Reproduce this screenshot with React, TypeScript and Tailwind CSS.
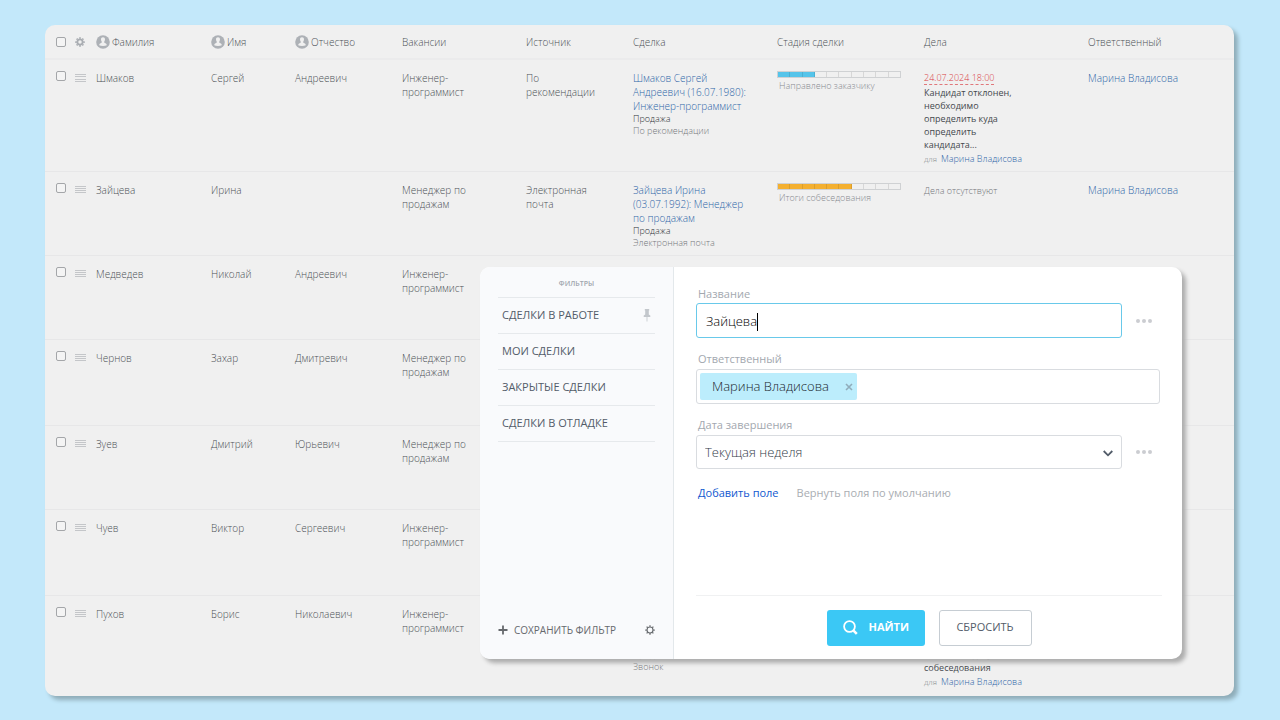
import type { ReactNode } from 'react';
import clsx from 'clsx';

type Activity = {
  date: string;
  text: string;
};

type Row = {
  surname: string;
  name: string;
  patronymic?: string;
  vacancy: string;
  height: string;
  source?: string;
  deal?: string;
  dealSource?: string;
  stage?: { label: string; done: number; color: string };
  activity?: Activity;
};

const engineer = 'Инженер-программист';
const manager = 'Менеджер по продажам';

const rows: Row[] = [
  {
    surname: 'Шмаков',
    name: 'Сергей',
    patronymic: 'Андреевич',
    vacancy: engineer,
    height: 'h-[112px]',
    source: 'По рекомендации',
    deal: 'Шмаков Сергей Андреевич (16.07.1980): Инженер-программист',
    dealSource: 'По рекомендации',
    stage: { label: 'Направлено заказчику', done: 3, color: 'bg-[#55c4ea]' },
    activity: {
      date: '24.07.2024 18:00',
      text: 'Кандидат отклонен, необходимо определить куда определить кандидата...',
    },
  },
  {
    surname: 'Зайцева',
    name: 'Ирина',
    vacancy: manager,
    height: 'h-[84px]',
    source: 'Электронная почта',
    deal: 'Зайцева Ирина (03.07.1992): Менеджер по продажам',
    dealSource: 'Электронная почта',
    stage: { label: 'Итоги собеседования', done: 6, color: 'bg-[#f4b030]' },
  },
  { surname: 'Медведев', name: 'Николай', patronymic: 'Андреевич', vacancy: engineer, height: 'h-[84px]' },
  { surname: 'Чернов', name: 'Захар', patronymic: 'Дмитревич', vacancy: manager, height: 'h-[86px]' },
  { surname: 'Зуев', name: 'Дмитрий', patronymic: 'Юрьевич', vacancy: manager, height: 'h-[84px]' },
  { surname: 'Чуев', name: 'Виктор', patronymic: 'Сергеевич', vacancy: engineer, height: 'h-[86px]' },
  {
    surname: 'Пухов',
    name: 'Борис',
    patronymic: 'Николаевич',
    vacancy: engineer,
    height: 'h-[101px]',
    source: 'Звонок',
    deal: 'Пухов Борис Николаевич (12.03.1988): Инженер-программист',
    dealSource: 'Звонок',
    activity: {
      date: '26.07.2024 18:00',
      text: 'Связаться с кандидатом и назначить дату собеседования',
    },
  },
];

const columns = ['Вакансии', 'Источник', 'Сделка', 'Стадия сделки', 'Дела', 'Ответственный'];
const presets = ['Сделки в работе', 'Мои сделки', 'Закрытые сделки', 'Сделки в отладке'];

function PersonIcon() {
  return (
    <svg viewBox="0 0 14 14" className="size-3.5 shrink-0">
      <circle cx="7" cy="7" r="6.8" fill="#adb1b6" />
      <path
        d="M7 2.3c-1.300 0-2 .9-2 2.200 0 1 .4 1.700.8 2.200 0 .9-.3 1.300-1.200 1.600-.9.3-1.300.8-1.400 1.900 1 .5 2.400.7 3.800.7s2.800-.2 3.800-.7c-.1-1.100-.5-1.600-1.400-1.900-.9-.3-1.200-.7-1.200-1.600.4-.5.8-1.200.8-2.200C9 3.200 8.300 2.300 7 2.300z"
        fill="#f0f0f0"
      />
    </svg>
  );
}

type GearProps = {
  className?: string;
  hole: number;
  tooth: number;
};

function GearIcon({ className, hole, tooth }: GearProps) {
  return (
    <svg viewBox="0 0 16 16" className={className} fill="none" stroke="currentColor">
      <circle cx="8" cy="8" r={(hole + 5.8) / 2} strokeWidth={5.8 - hole} />
      {[0, 45, 90, 135, 180, 225, 270, 315].map((a) => (
        <path key={a} d="M8 2.800V.4" strokeWidth={tooth} transform={`rotate(${a} 8 8)`} />
      ))}
    </svg>
  );
}

function Checkbox({ label }: { label: string }) {
  return (
    <input
      type="checkbox"
      aria-label={label}
      className="block size-2.5 shrink-0 appearance-none rounded-xs border border-[#a4a6a9] bg-[#f4f4f4]"
    />
  );
}

function Link({ children }: { children: ReactNode }) {
  return (
    <a href="#" className="text-[#2f66a8]">
      {children}
    </a>
  );
}

function StageBar({ label, done, color }: { label: string; done: number; color: string }) {
  return (
    <>
      <div className="flex h-[7px] w-[124px] border border-[#cfd1d3]">
        {Array.from({ length: 10 }, (_, i) => (
          <div key={i} className={clsx('flex-1 border-black/10', i < 9 && 'border-r', i < done && color)} />
        ))}
      </div>
      <div className="mt-0.5 pl-0.5 text-[9px] leading-3 text-[#888b90]">{label}</div>
    </>
  );
}

function ActivityCell({ activity }: { activity: Activity }) {
  return (
    <div className="w-24 text-[9px] leading-[13px]">
      <span className="inline-block border-b border-dashed border-[#e0777b] leading-3 whitespace-nowrap text-[#d93d44]">
        {activity.date}
      </span>
      <p className="mt-px font-normal text-[#44484d]">{activity.text}</p>
      <p className="mt-px whitespace-nowrap">
        <span className="mr-1 text-[8px] text-[#85888c]">для</span>
        <Link>Марина Владисова</Link>
      </p>
    </div>
  );
}

function DealsTable() {
  return (
    <table className="w-full table-fixed text-left text-[10px] leading-[14px] font-light text-[#4c5056]">
      <colgroup>
        <col className="w-[51px]" />
        <col className="w-[115px]" />
        <col className="w-[84px]" />
        <col className="w-[107px]" />
        <col className="w-[124px]" />
        <col className="w-[107px]" />
        <col className="w-[144px]" />
        <col className="w-[147px]" />
        <col className="w-[164px]" />
        <col />
      </colgroup>
      <thead>
        <tr className="h-[34px] border-b-2 border-[#ebebec] [&>th]:font-light">
          <th>
            <div className="flex items-center gap-[9px] pl-[11px]">
              <Checkbox label="Выбрать все" />
              <button type="button" aria-label="Настройки" className="text-[#a9adb2]">
                <GearIcon className="size-2.5" hole={2.8} tooth={2.8} />
              </button>
            </div>
          </th>
          {['Фамилия', 'Имя', 'Отчество'].map((title) => (
            <th key={title}>
              <div className="flex items-center gap-0.5">
                <PersonIcon />
                {title}
              </div>
            </th>
          ))}
          {columns.map((title) => (
            <th key={title}>{title}</th>
          ))}
        </tr>
      </thead>
      <tbody>
        {rows.map((row) => (
          <tr
            key={row.surname}
            className={clsx(row.height, 'border-b border-[#e7e7e8] align-top last:border-0 [&>td]:pt-[11px]')}
          >
            <td>
              <div className="flex gap-[9px] pl-[11px]">
                <Checkbox label={row.surname} />
                <div className="mt-[3px] flex h-2 w-[11px] flex-col justify-between">
                  <i className="h-px bg-[#c4c6c9]" />
                  <i className="h-px bg-[#c4c6c9]" />
                  <i className="h-px bg-[#c4c6c9]" />
                  <i className="h-px bg-[#c4c6c9]" />
                </div>
              </div>
            </td>
            <td>{row.surname}</td>
            <td>{row.name}</td>
            <td>{row.patronymic}</td>
            <td className="pr-12">{row.vacancy}</td>
            <td className="pr-8">{row.source}</td>
            <td>
              {row.deal && (
                <div className="w-[122px]">
                  <Link>{row.deal}</Link>
                  <div className="text-[9px] leading-3 text-[#2f3338]">Продажа</div>
                  <div className="text-[9px] leading-3 text-[#75787c]">{row.dealSource}</div>
                </div>
              )}
            </td>
            <td>{row.stage && <StageBar {...row.stage} />}</td>
            <td>
              {row.activity ? (
                <ActivityCell activity={row.activity} />
              ) : (
                <span className="text-[9px] text-[#75787c]">Дела отсутствуют</span>
              )}
            </td>
            <td>
              <Link>Марина Владисова</Link>
            </td>
          </tr>
        ))}
      </tbody>
    </table>
  );
}

function PinIcon() {
  return (
    <svg viewBox="0 0 8 13" className="h-[13px] w-2" fill="#c3c7cc">
      <path d="M1.800 0h4.400v1.500H5.800V5.500l1.500 1v1.500H4.400V12.500h-.8V8H.7V6.500l1.500-1V1.500h-.4z" />
    </svg>
  );
}

function Dots() {
  return (
    <button type="button" aria-label="Ещё" className="flex w-[38px] items-center justify-center gap-0.5 pl-1.5">
      <i className="size-1 rounded-full bg-[#cbcdd1]" />
      <i className="size-1 rounded-full bg-[#cbcdd1]" />
      <i className="size-1 rounded-full bg-[#cbcdd1]" />
    </button>
  );
}

function FilterSidebar() {
  return (
    <aside className="flex w-[194px] shrink-0 flex-col border-r border-[#e3e8eb] bg-[#f9fafc] px-[18px] pt-3 pb-[21px]">
      <h2 className="pb-2 text-center text-[7px] leading-[10px] font-semibold text-[#a0a6ae] uppercase">Фильтры</h2>
      <ul className="border-t border-[#e6e9ec]">
        {presets.map((preset, i) => (
          <li key={preset} className="border-b border-[#e6e9ec]">
            <button
              type="button"
              className="flex h-[35px] w-full items-center justify-between px-1 text-[11px] text-[#535c69] uppercase"
            >
              {preset}
              {i === 0 && <PinIcon />}
            </button>
          </li>
        ))}
      </ul>
      <div className="mt-auto flex items-center justify-between text-[#66696d]">
        <button type="button" className="flex items-center gap-1.5 text-[10px] leading-4 uppercase">
          <svg viewBox="0 0 10 10" className="size-2.5" stroke="currentColor" strokeWidth="1.8">
            <path d="M5 .5v9M.5 5h9" />
          </svg>
          Сохранить фильтр
        </button>
        <button type="button" aria-label="Настройки фильтра">
          <GearIcon className="size-2.5" hole={3.9} tooth={2} />
        </button>
      </div>
    </aside>
  );
}

function FilterForm() {
  return (
    <form className="flex min-w-0 flex-1 flex-col px-[22px] pt-[19px] pb-[13px]">
      <label htmlFor="title" className="mb-px pl-0.5 text-[11px] leading-4 text-[#a3a8af]">
        Название
      </label>
      <div className="flex">
        <div className="flex h-[35px] flex-1 items-center rounded-[3px] border border-[#69c9ea] px-[9px] pt-0.5">
          <input
            id="title"
            defaultValue="Зайцева"
            className="[field-sizing:content] text-[13px] font-light text-black outline-none"
          />
          <span className="h-[18px] w-px bg-black" />
        </div>
        <Dots />
      </div>

      <label htmlFor="owner" className="mt-3 mb-px pl-0.5 text-[11px] leading-[18px] text-[#a3a8af]">
        Ответственный
      </label>
      <div className="flex h-[35px] items-center rounded-[3px] border border-[#d9dce0] px-[3px]">
        <span className="flex h-[27px] items-center gap-4 rounded-xs bg-[#bcedfc] pr-1 pl-3 text-[13px] font-light whitespace-nowrap text-[#20272d]">
          Марина Владисова
          <button type="button" aria-label="Удалить" className="text-[#90adbb]">
            <svg viewBox="0 0 8 8" className="size-2" stroke="currentColor" strokeWidth="1.6">
              <path d="M1 1l6 6M7 1L1 7" />
            </svg>
          </button>
        </span>
        <input id="owner" className="min-w-0 flex-1 outline-none" />
      </div>

      <label htmlFor="period" className="mt-3 mb-px pl-0.5 text-[11px] leading-[18px] text-[#a3a8af]">
        Дата завершения
      </label>
      <div className="flex">
        <div className="relative flex-1">
          <select
            id="period"
            className="h-[34px] w-full appearance-none rounded-[3px] border border-[#d9dce0] px-2 pt-0.5 text-[13px] font-light text-[#333c49]"
          >
            <option>Текущая неделя</option>
          </select>
          <svg
            viewBox="0 0 10 7"
            className="pointer-events-none absolute top-[15px] right-[9px] h-[7px] w-2.5"
            fill="none"
            stroke="#525c69"
            strokeWidth="1.8"
          >
            <path d="M.7 1L5 5.300 9.300 1" />
          </svg>
        </div>
        <Dots />
      </div>

      <div className="mt-4 flex gap-[18px] pl-0.5 text-[11px] leading-4">
        <a href="#" className="text-[#1058d0]">
          Добавить поле
        </a>
        <a href="#" className="text-[#a9adb2]">
          Вернуть поля по умолчанию
        </a>
      </div>

      <div className="mt-auto -mr-0.5 flex justify-center gap-3.5 border-t border-[#f0f1f2] pt-3.5 text-[11px]">
        <button
          type="submit"
          className="flex h-9 w-[98px] items-center gap-[11px] rounded-[3px] bg-[#3bc8f5] pb-px pl-4 font-bold text-white"
        >
          <svg viewBox="0 0 15 15" className="size-[15px]" fill="none" stroke="currentColor">
            <circle cx="6.500" cy="6.500" r="5.400" strokeWidth="1.800" />
            <path d="M10.300 10.300l3.500 3.500" strokeWidth="2.600" />
          </svg>
          НАЙТИ
        </button>
        <button type="reset" className="h-9 w-[93px] rounded-[3px] border border-[#c6cdd3] pb-px text-[#535c69]">
          СБРОСИТЬ
        </button>
      </div>
    </form>
  );
}

export default function App() {
  return (
    <div className="min-h-screen bg-[#c3e8fa] pt-[25px] pr-[46px] pb-6 pl-[45px] font-['Open_Sans','Noto_Sans',sans-serif]">
      <main className="relative rounded-[10px] bg-[#f0f0f0] shadow-[4px_4px_4px_#8fadb9]">
        <DealsTable />
        <section className="absolute top-[242px] right-[52px] left-[435px] flex h-[392px] rounded-[10px] bg-white shadow-[4px_4px_4px_#adadad] [&>aside]:rounded-l-[10px]">
          <FilterSidebar />
          <FilterForm />
        </section>
      </main>
    </div>
  );
}
